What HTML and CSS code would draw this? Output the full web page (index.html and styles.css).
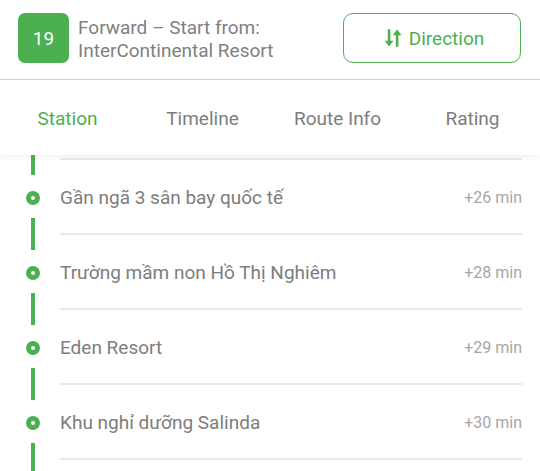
FILE: index.html
```html
<!DOCTYPE html>
<html lang="vi">
<head>
<meta charset="utf-8">
<title>Route 19</title>
<link rel="stylesheet" href="styles.css">
</head>
<body>
<div class="app">
  <header class="top">
    <div class="route">
      <div class="badge">19</div>
      <div class="route-title">
        <div>Forward – Start from:</div>
        <div>InterContinental Resort</div>
      </div>
    </div>
    <button class="dir-btn">
      <svg class="dir-icon" viewBox="0 0 24 24" width="22" height="22" aria-hidden="true">
        <path d="M6.3 2.5h2.8v12.4h3.4L7.7 21.2 2.9 14.9h3.4z" fill="currentColor"/>
        <path d="M15.1 21.5h2.8V9.1h3.4L16.5 2.8 11.7 9.1h3.4z" fill="currentColor"/>
      </svg>
      <span>Direction</span>
    </button>
  </header>
  <nav class="tabs">
    <div class="tab active">Station</div>
    <div class="tab">Timeline</div>
    <div class="tab">Route Info</div>
    <div class="tab">Rating</div>
  </nav>
  <main class="list">
    <div class="row partial">
      <div class="rail-col"></div>
      <div class="row-body"></div>
    </div>
    <div class="row">
      <div class="rail-col"><span class="dot"></span></div>
      <div class="row-body"><span class="name">Gần ngã 3 sân bay quốc tế</span><span class="time">+26 min</span></div>
    </div>
    <div class="row">
      <div class="rail-col"><span class="dot"></span></div>
      <div class="row-body"><span class="name">Trường mầm non Hồ Thị Nghiêm</span><span class="time">+28 min</span></div>
    </div>
    <div class="row">
      <div class="rail-col"><span class="dot"></span></div>
      <div class="row-body"><span class="name">Eden Resort</span><span class="time">+29 min</span></div>
    </div>
    <div class="row">
      <div class="rail-col"><span class="dot"></span></div>
      <div class="row-body"><span class="name">Khu nghỉ dưỡng Salinda</span><span class="time">+30 min</span></div>
    </div>
    <div class="row">
      <div class="rail-col"><span class="dot"></span></div>
      <div class="row-body"></div>
    </div>
  </main>
</div>
</body>
</html>
```
FILE: styles.css
```css
* { box-sizing: border-box; }
html, body { margin: 0; padding: 0; background: #fff; }
body {
  font-family: Roboto, "Noto Sans", "Liberation Sans", sans-serif;
  color: #7d7d7d;
}
.app {
  width: 540px;
  height: 471px;
  overflow: hidden;
  display: flex;
  flex-direction: column;
  background: #fff;
}
.top {
  height: 80px;
  flex: none;
  display: flex;
  align-items: flex-start;
  justify-content: space-between;
  padding: 13px 19px 0 18px;
  border-bottom: 1px solid #cdd6d6;
}
.route {
  display: flex;
  align-items: flex-start;
  gap: 9px;
}
.badge {
  width: 51px;
  height: 50px;
  border-radius: 7px;
  background: #4caf50;
  color: #fff;
  font-size: 19px;
  display: flex;
  align-items: center;
  justify-content: center;
}
.route-title {
  font-size: 19px;
  line-height: 23px;
  color: #808080;
  padding-top: 3px;
}
.dir-btn {
  width: 178px;
  height: 50px;
  border: 1.5px solid #4caf50;
  border-radius: 10px;
  background: #fff;
  color: #4caf50;
  font-family: inherit;
  font-size: 19px;
  display: flex;
  align-items: center;
  justify-content: center;
  gap: 5px;
  padding: 0 0 0 2px;
}
.dir-icon { display: block; }
.tabs {
  height: 75px;
  flex: none;
  display: grid;
  grid-template-columns: repeat(4, 1fr);
  align-items: center;
  background: #fff;
  position: relative;
  z-index: 1;
  box-shadow: 0 2px 5px rgba(0, 0, 0, 0.06);
  padding-top: 1px;
}
.tab {
  text-align: center;
  font-size: 19px;
  color: #7d7d7d;
}
.tab.active { color: #4caf50; }
.list {
  flex: 1;
  overflow: hidden;
  background-image: linear-gradient(#4caf50 0 32px, transparent 32px);
  background-size: 4px 75px;
  background-repeat: repeat-y;
  background-position: 31px -12px;
}
.row {
  display: flex;
  height: 75px;
}
.row.partial { height: 5px; }
.rail-col {
  width: 60px;
  flex: none;
  display: flex;
  align-items: center;
  padding-left: 26px;
}
.dot {
  width: 14px;
  height: 14px;
  border-radius: 50%;
  border: 5px solid #4caf50;
  background: #fff;
}
.row-body {
  flex: 1;
  margin-right: 18px;
  display: flex;
  align-items: center;
  justify-content: space-between;
  border-bottom: 2px solid #e5e9ea;
  padding-top: 2px;
}
.name {
  font-size: 19px;
  color: #7d7d7d;
}
.time {
  font-size: 16px;
  color: #a6a6a6;
}
```
